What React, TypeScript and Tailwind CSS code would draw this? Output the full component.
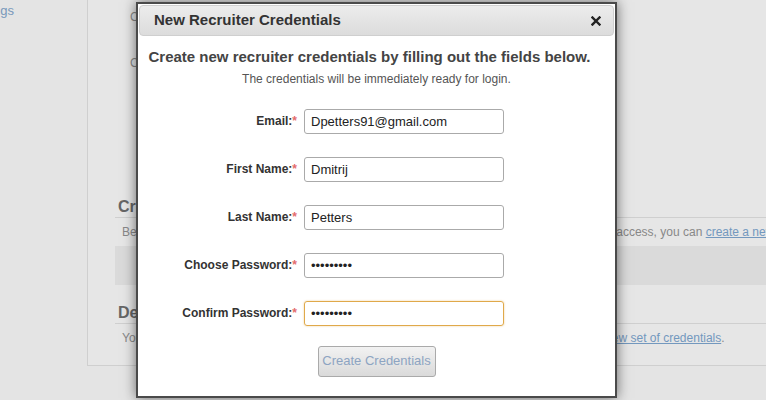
import { useState } from 'react'

const fields = [
  { label: 'Email:', value: 'Dpetters91@gmail.com', type: 'text' },
  { label: 'First Name:', value: 'Dmitrij', type: 'text' },
  { label: 'Last Name:', value: 'Petters', type: 'text' },
  { label: 'Choose Password:', value: 'secret123', type: 'password' },
  { label: 'Confirm Password:', value: 'secret123', type: 'password', focused: true },
]

function CloseIcon() {
  return (
    <svg width="10" height="10" viewBox="0 0 10 10">
      <path d="M1.5 1.5 L8.5 8.5 M8.5 1.5 L1.5 8.5" stroke="#222" strokeWidth="2.4" strokeLinecap="square" />
    </svg>
  )
}

function CredentialsDialog() {
  const [values, setValues] = useState(fields.map((f) => f.value))

  return (
    <div className="absolute left-[136px] top-[2px] flex h-[396px] w-[481px] flex-col border-2 border-[#4a4a4a] bg-white p-px shadow-[0_0_12px_rgba(0,0,0,0.55)]">
      <div className="flex h-[31px] items-center justify-between rounded-[4px] border border-[#cfcfcf] bg-gradient-to-b from-[#ececec] to-[#dcdcdc] pl-[14px] pr-[12px]">
        <span className="text-[15px] font-bold text-[#333]">New Recruiter Credentials</span>
        <CloseIcon />
      </div>

      <div className="mt-[10px] pr-[14px] text-center text-[15px] font-bold text-[#444]">
        Create new recruiter credentials by filling out the fields below.
      </div>
      <div className="mt-[1px] text-center text-[12px] text-[#555]">
        The credentials will be immediately ready for login.
      </div>

      <div className="mt-[21px] flex flex-col gap-[23px]">
        {fields.map((f, i) => (
          <div key={f.label} className="flex items-center">
            <label className="w-[158px] text-right text-[12px] font-bold text-[#333]">
              {f.label}
              <span className="text-[#e46b6b]">*</span>
            </label>
            <input
              type={f.type}
              value={values[i]}
              onChange={(e) => setValues(values.map((v, j) => (j === i ? e.target.value : v)))}
              className={
                f.focused
                  ? 'ml-[7px] h-[25px] w-[200px] rounded-[3px] border border-[#e0a94a] px-[6px] text-[13px] text-[#222] shadow-[0_0_2px_rgba(224,169,74,0.6)] outline-none'
                  : 'ml-[7px] h-[25px] w-[200px] rounded-[3px] border border-[#aaa] px-[6px] text-[13px] text-[#222] outline-none'
              }
            />
          </div>
        ))}
      </div>

      <div className="mt-[20px] flex justify-center">
        <button
          disabled
          className="h-[31px] w-[118px] whitespace-nowrap rounded-[3px] border border-[#aaa] bg-gradient-to-b from-[#f2f2f2] to-[#dadada] px-0 text-[13px] text-[#8da4c2]"
        >
          Create Credentials
        </button>
      </div>
    </div>
  )
}

export default function App() {
  return (
    <div className="relative h-[400px] w-[766px] overflow-hidden bg-[#e4e4e4] font-['Liberation_Sans',Arial,sans-serif]">
      <div className="flex">
        <div className="w-[87px] shrink-0 overflow-hidden pt-[2px]">
          <a className="-ml-[33px] block whitespace-nowrap text-[13px] leading-[18px] text-[#7898bb]">Settings</a>
        </div>

        <div className="h-[366px] w-[700px] shrink-0 border-b border-l border-[#cfcfcf] bg-[#e6e6e6]">
          <div className="pl-[42px] pt-[8px] text-[12px] leading-[18px] text-[#888]">
            <div className="h-[46px]">Company:</div>
            <div>Contact:</div>
          </div>

          <div className="ml-[27px] mt-[125px]">
            <div className="border-b border-[#cfcfcf] pl-[3px] text-[16px] font-bold leading-[20px] text-[#666]">
              Create Credentials
            </div>
            <div className="whitespace-nowrap py-[7px] pl-[7px] text-[12px] leading-[14px] text-[#888]">
              Before a recruiter can sign in to post roles and review candidate profiles with their own portal access, you can{' '}
              <a className="text-[#7398be] underline">create a new set of credentials</a>.
            </div>
            <div className="h-[39px] bg-[#dadada]" />

            <div className="mt-[18px] border-b border-[#cfcfcf] pl-[3px] text-[16px] font-bold leading-[20px] text-[#666]">
              Delete Credentials
            </div>
            <div className="whitespace-nowrap py-[7px] pl-[7px] text-[12px] leading-[14px] text-[#888]">
              You may remove or suspend the current recruiter login at any time and then simply issue a{' '}
              <a className="text-[#7398be] underline">new set of credentials</a>.
            </div>
          </div>
        </div>
      </div>

      <CredentialsDialog />
    </div>
  )
}
